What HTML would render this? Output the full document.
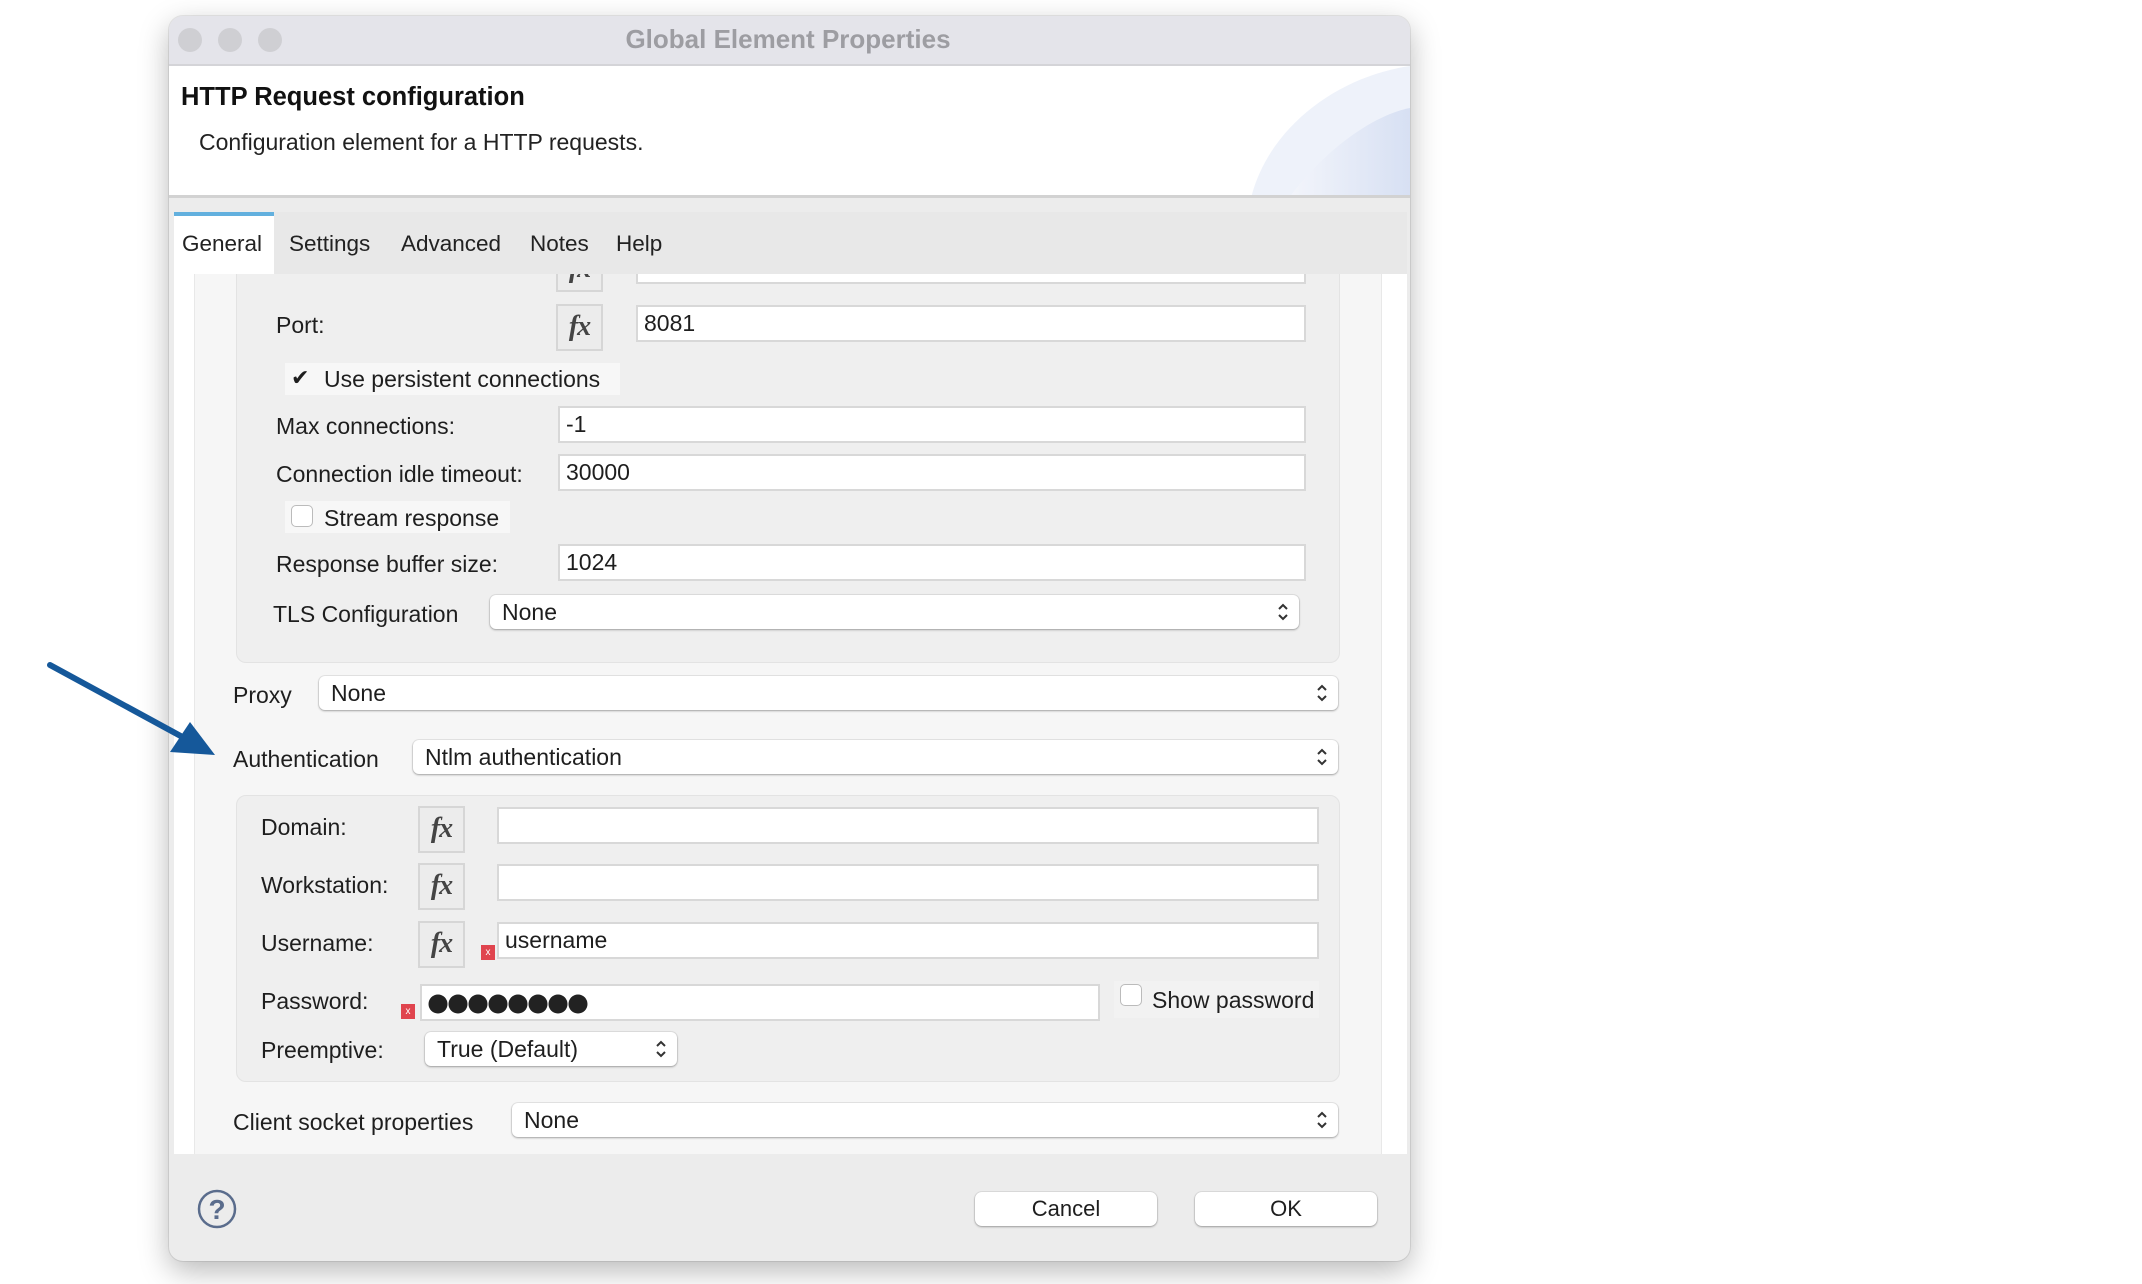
<!DOCTYPE html>
<html><head><meta charset="utf-8"><style>
*{box-sizing:border-box;margin:0;padding:0}
body{width:2142px;height:1284px;background:#fff;position:relative;overflow:hidden;font-family:"Liberation Sans",sans-serif;color:#1e1e1e}
.a{position:absolute}
.win{left:169px;top:16px;width:1241px;height:1245px;background:#ececec;border-radius:14px;box-shadow:0 10px 30px rgba(0,0,0,.28),0 0 0 1px rgba(0,0,0,.08);overflow:hidden}
.lbl{position:absolute;font-size:23px;line-height:24px;color:#1e1e1e;white-space:nowrap}
.inp{position:absolute;background:#fff;border:2px solid #d8d8d8;height:37px;font-size:23px;line-height:33px;padding-left:6px}
.fx{position:absolute;width:47px;height:47px;border:2px solid #d6d6d6;background:#ececec;font-family:"Liberation Serif",serif;font-style:italic;font-weight:bold;font-size:28px;line-height:42px;text-align:center;color:#444;letter-spacing:-1px}
.sel{position:absolute;background:#fff;border-radius:6px;box-shadow:0 1px 2px rgba(0,0,0,.3),0 0 0 1px rgba(0,0,0,.06);height:34px;font-size:23px;line-height:34px;padding-left:12px}
.arr{position:absolute;right:10px;top:6px;width:12px;height:22px}
.cb{position:absolute;width:22px;height:22px;border:1px solid #bbb;border-radius:5px;background:#fff}
.grp{position:absolute;background:#efefef;border:1px solid #e3e3e3;border-radius:10px}
.rx{position:absolute;width:14px;height:15px;background:#e0444e;color:#fff;font-size:10px;line-height:15px;text-align:center}
.btn{position:absolute;background:#fff;border-radius:7px;box-shadow:0 1px 2px rgba(0,0,0,.3),0 0 0 1px rgba(0,0,0,.06);font-size:22px;line-height:34px;text-align:center;height:34px}
.tab{position:absolute;top:231px;font-size:22.5px;color:#222}
</style></head><body>
<div class="a win">
 <div class="a" style="left:0;top:0;width:1241px;height:50px;background:#e4e4ea;border-bottom:2px solid #d4d4d8"></div>
 <div class="a" style="left:9px;top:12px;width:24px;height:24px;border-radius:50%;background:#cfcfd3"></div>
 <div class="a" style="left:49px;top:12px;width:24px;height:24px;border-radius:50%;background:#cfcfd3"></div>
 <div class="a" style="left:89px;top:12px;width:24px;height:24px;border-radius:50%;background:#cfcfd3"></div>
 <div class="a" style="left:0;top:8px;width:1238px;text-align:center;font-size:26px;font-weight:bold;color:#9d9da2;line-height:30px">Global Element Properties</div>
 <div class="a" style="left:0;top:50px;width:1241px;height:132px;background:#fff;border-bottom:3px solid #d2d2d2;overflow:hidden">
  <svg class="a" style="left:1060px;top:0" width="181" height="132"><defs><linearGradient id="g" x1="0" x2="1"><stop offset="0" stop-color="#f3f5fb"/><stop offset="1" stop-color="#d7e0f3"/></linearGradient></defs>
  <path d="M22 132 C40 60 110 10 181 0 L181 132Z" fill="#eef2fa"/>
  <path d="M60 132 C90 90 140 50 181 42 L181 132Z" fill="url(#g)"/></svg>
 </div>
 <div class="a" style="left:12px;top:67px;font-size:25.5px;font-weight:bold;color:#111">HTTP Request configuration</div>
 <div class="a" style="left:30px;top:113px;font-size:23px;color:#222">Configuration element for a HTTP requests.</div>
 <div class="a" style="left:5px;top:258px;width:1233px;height:880px;background:#fff;overflow:hidden">
  <div class="a" style="left:20px;top:0;width:1188px;height:880px;background:#f6f6f6;border-left:1px solid #e8e8e8;border-right:1px solid #e8e8e8"></div>
 </div>
</div>
<div class="grp" style="left:236px;top:240px;width:1104px;height:423px;border-top:none;border-radius:0 0 10px 10px"></div>
<div class="fx" style="left:556px;top:262px;height:30px;line-height:10px;overflow:hidden">fx</div>
<div class="inp" style="left:636px;top:262px;width:670px;height:22px;border-top:none"></div>
<div class="a" style="left:174px;top:258px;width:1233px;height:16px;background:#fff"></div>
<div class="a" style="left:174px;top:212px;width:1233px;height:62px;background:#e8e8e8"></div>
<div class="a" style="left:174px;top:212px;width:100px;height:62px;background:#fff;border-top:4px solid #62b0de"></div>
<div class="tab" style="left:182px">General</div>
<div class="tab" style="left:289px">Settings</div>
<div class="tab" style="left:401px">Advanced</div>
<div class="tab" style="left:530px">Notes</div>
<div class="tab" style="left:616px">Help</div>

<div class="lbl" style="left:276px;top:313px">Port:</div>
<div class="fx" style="left:556px;top:304px">fx</div>
<div class="inp" style="left:636px;top:305px;width:670px">8081</div>
<div class="a" style="left:285px;top:363px;width:335px;height:32px;background:#f7f7f7"></div>
<div class="cb" style="left:291px;top:367px;border:none;background:none;font-size:22px;line-height:22px">✔</div>
<div class="lbl" style="left:324px;top:367px">Use persistent connections</div>
<div class="lbl" style="left:276px;top:414px">Max connections:</div>
<div class="inp" style="left:558px;top:406px;width:748px">-1</div>
<div class="lbl" style="left:276px;top:462px">Connection idle timeout:</div>
<div class="inp" style="left:558px;top:454px;width:748px">30000</div>
<div class="a" style="left:285px;top:501px;width:225px;height:32px;background:#f7f7f7"></div>
<div class="cb" style="left:291px;top:505px"></div>
<div class="lbl" style="left:324px;top:506px">Stream response</div>
<div class="lbl" style="left:276px;top:552px">Response buffer size:</div>
<div class="inp" style="left:558px;top:544px;width:748px">1024</div>
<div class="lbl" style="left:273px;top:602px">TLS Configuration</div>
<div class="sel" style="left:490px;top:595px;width:809px">None<svg class="arr" viewBox="0 0 12 22"><path d="M2 8 L6 4 L10 8 M2 14 L6 18 L10 14" stroke="#333" stroke-width="2" fill="none"/></svg></div>

<div class="lbl" style="left:233px;top:683px">Proxy</div>
<div class="sel" style="left:319px;top:676px;width:1019px">None<svg class="arr" viewBox="0 0 12 22"><path d="M2 8 L6 4 L10 8 M2 14 L6 18 L10 14" stroke="#333" stroke-width="2" fill="none"/></svg></div>
<div class="lbl" style="left:233px;top:747px">Authentication</div>
<div class="sel" style="left:413px;top:740px;width:925px">Ntlm authentication<svg class="arr" viewBox="0 0 12 22"><path d="M2 8 L6 4 L10 8 M2 14 L6 18 L10 14" stroke="#333" stroke-width="2" fill="none"/></svg></div>

<div class="grp" style="left:236px;top:795px;width:1104px;height:287px"></div>
<div class="lbl" style="left:261px;top:815px">Domain:</div>
<div class="fx" style="left:418px;top:806px">fx</div>
<div class="inp" style="left:497px;top:807px;width:822px"></div>
<div class="lbl" style="left:261px;top:873px">Workstation:</div>
<div class="fx" style="left:418px;top:863px">fx</div>
<div class="inp" style="left:497px;top:864px;width:822px"></div>
<div class="lbl" style="left:261px;top:931px">Username:</div>
<div class="fx" style="left:418px;top:921px">fx</div>
<div class="rx" style="left:481px;top:945px">x</div>
<div class="inp" style="left:497px;top:922px;width:822px">username</div>
<div class="lbl" style="left:261px;top:989px">Password:</div>
<div class="rx" style="left:401px;top:1004px">x</div>
<div class="inp" style="left:420px;top:984px;width:680px"><svg class="a" style="left:6px;top:7px" width="170" height="22"><g fill="#222"><circle cx="10" cy="11" r="9.5"/><circle cx="30" cy="11" r="9.5"/><circle cx="50" cy="11" r="9.5"/><circle cx="70" cy="11" r="9.5"/><circle cx="90" cy="11" r="9.5"/><circle cx="110" cy="11" r="9.5"/><circle cx="130" cy="11" r="9.5"/><circle cx="150" cy="11" r="9.5"/></g></svg></div>
<div class="a" style="left:1114px;top:981px;width:205px;height:37px;background:#f2f2f2"></div>
<div class="cb" style="left:1120px;top:984px"></div>
<div class="lbl" style="left:1152px;top:988px">Show password</div>
<div class="lbl" style="left:261px;top:1038px">Preemptive:</div>
<div class="sel" style="left:425px;top:1032px;width:252px">True (Default)<svg class="arr" viewBox="0 0 12 22"><path d="M2 8 L6 4 L10 8 M2 14 L6 18 L10 14" stroke="#333" stroke-width="2" fill="none"/></svg></div>

<div class="lbl" style="left:233px;top:1110px">Client socket properties</div>
<div class="sel" style="left:512px;top:1103px;width:826px">None<svg class="arr" viewBox="0 0 12 22"><path d="M2 8 L6 4 L10 8 M2 14 L6 18 L10 14" stroke="#333" stroke-width="2" fill="none"/></svg></div>

<svg class="a" style="left:196px;top:1188px" width="42" height="42"><circle cx="21" cy="21" r="18" fill="none" stroke="#5a6c8c" stroke-width="2.5"/><text x="21" y="31" text-anchor="middle" font-family="Liberation Sans" font-weight="bold" font-size="28" fill="#5a6c8c">?</text></svg>
<div class="btn" style="left:975px;top:1192px;width:182px">Cancel</div>
<div class="btn" style="left:1195px;top:1192px;width:182px">OK</div>

<svg class="a" style="left:0;top:0" width="260" height="800"><line x1="50" y1="665" x2="188" y2="740" stroke="#15589a" stroke-width="6" stroke-linecap="round"/><path d="M215 755 L170 752 L190 722Z" fill="#15589a"/></svg>
</body></html>
